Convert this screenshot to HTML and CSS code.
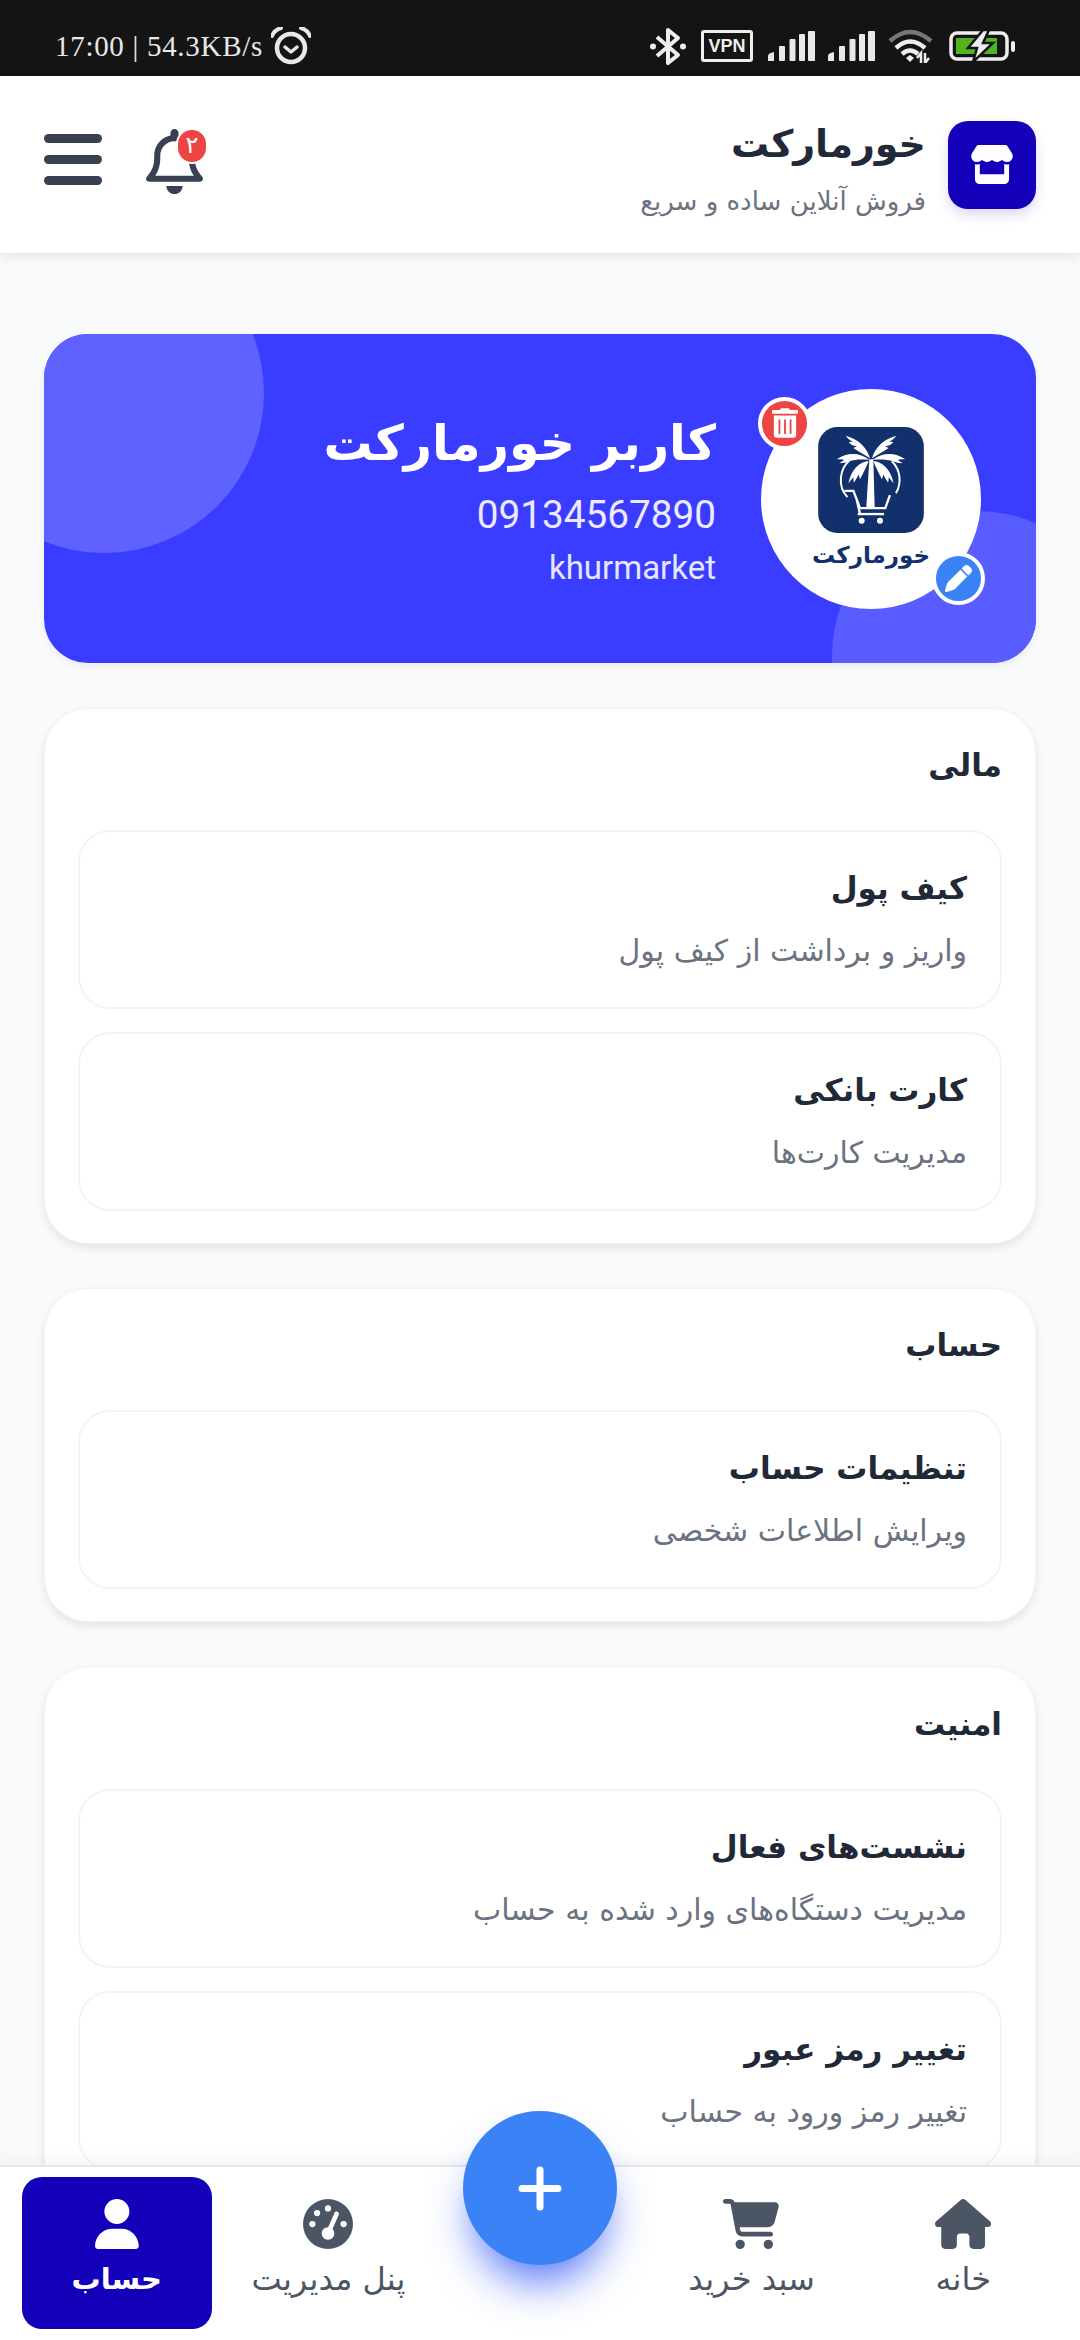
FILE: index.html
```html
<!DOCTYPE html>
<html lang="fa" dir="rtl">
<head>
    <meta charset="UTF-8">
    <meta name="viewport" content="width=device-width, initial-scale=1.0">
    <title>خورمارکت</title>
    <link rel="stylesheet" href="styles.css">
</head>
<body>
<div class="screen">
    <!-- phone status bar -->
    <div class="status-bar" dir="ltr">
        <div class="status-left">
            <span class="status-text">17:00 | 54.3KB/s</span>
            <svg class="ic-alarm" viewBox="0 0 40 38"><path d="M1 9 C3 4 6 2 10 1 M39 9 C37 4 34 2 30 1" fill="none" stroke="#e8e8e8" stroke-width="4" stroke-linecap="round"/><circle cx="20" cy="21" r="14" fill="none" stroke="#e8e8e8" stroke-width="4.5"/><path d="M14 20 L20 25 L26 20" fill="none" stroke="#e8e8e8" stroke-width="3.5" stroke-linecap="round" stroke-linejoin="round"/></svg>
        </div>
        <div class="status-right">
            <svg class="ic-bt" viewBox="0 0 36 39"><path d="M7 10 L28 28 L18 36 V3 L28 11 L7 29" fill="none" stroke="#eee" stroke-width="4" stroke-linejoin="round"/><circle cx="3" cy="19.500" r="3" fill="#eee"/><circle cx="33" cy="19.500" r="3" fill="#eee"/></svg>
            <span class="vpn">VPN</span>
            <svg class="ic-signal" viewBox="0 0 47 30"><g fill="#e8e8e8"><path d="M0 30V25Q0 22 6 21V30Z"/><rect x="11" y="15" width="6" height="15" rx="1"/><rect x="21.500" y="8" width="6" height="22" rx="1"/><rect x="40" y="0" width="7" height="30" rx="1"/><rect x="31" y="3" width="6" height="27" rx="1"/></g></svg>
            <svg class="ic-signal" viewBox="0 0 47 30"><g fill="#e8e8e8"><path d="M0 30V25Q0 22 6 21V30Z"/><rect x="11" y="15" width="6" height="15" rx="1"/><rect x="21.500" y="8" width="6" height="22" rx="1"/><rect x="40" y="0" width="7" height="30" rx="1"/><rect x="31" y="3" width="6" height="27" rx="1"/></g></svg>
            <svg class="ic-wifi" viewBox="0 0 45 34"><path d="M2 12 Q22 -6 43 12" fill="none" stroke="#777" stroke-width="4.500"/><path d="M8 19 Q22 6 37 19" fill="none" stroke="#eee" stroke-width="4.500"/><path d="M14 25 Q22 18 30 25" fill="none" stroke="#eee" stroke-width="4.500"/><path d="M18 29 L22 26 L26 29 L22 33Z" fill="#eee"/><path d="M33 34V24L29 29M37 24V34L41 29" fill="none" stroke="#eee" stroke-width="2.500"/></svg>
            <svg class="ic-batt" viewBox="0 0 68 30"><rect x="2" y="2" width="56" height="26" rx="6" fill="none" stroke="#eee" stroke-width="3.500"/><rect x="7" y="7" width="41" height="16" fill="#52b520"/><rect x="62" y="10" width="4" height="11" rx="2" fill="#eee"/><path d="M34 -1 L19 17 H28 L24 31 L44 12 H34 L40 -1Z" fill="#eee" stroke="#141414" stroke-width="2.500"/></svg>
        </div>
    </div>

    <header class="top-bar">
        <div class="brand">
            <div class="brand-logo">
                <svg viewBox="0 0 576 512"><path d="M547.6 103.8L490.3 13.1C485.2 5 476.1 0 466.4 0H109.6C99.9 0 90.8 5 85.7 13.1L28.3 103.8c-29.6 46.8-3.4 111.9 51.9 119.4c4 .5 8.1 .8 12.1 .8c26.1 0 49.3-11.4 65.2-29c15.9 17.6 39.1 29 65.2 29c26.1 0 49.3-11.4 65.2-29c15.9 17.6 39.1 29 65.2 29c26.2 0 49.3-11.4 65.2-29c16 17.6 39.1 29 65.2 29c4.1 0 8.1-.3 12.1-.8c55.5-7.4 81.8-72.5 52.1-119.4zM499.7 254.9l-.1 0c-5.3 .7-10.7 1.1-16.2 1.1c-12.4 0-24.3-1.9-35.4-5.3V384H128V250.6c-11.2 3.5-23.2 5.4-35.6 5.4c-5.5 0-11-.4-16.3-1.1l-.1 0c-4.1-.6-8.1-1.3-12-2.3V384v64c0 35.3 28.7 64 64 64H448c35.3 0 64-28.7 64-64V384 252.6c-4 1-8 1.8-12.3 2.3z"/></svg>
            </div>
            <div class="brand-text">
                <div class="brand-name">خورمارکت</div>
                <div class="brand-sub">فروش آنلاین ساده و سریع</div>
            </div>
        </div>
        <div class="top-actions">
            <div class="bell">
                <svg viewBox="0 0 448 512"><path d="M224 0c-17.7 0-32 14.3-32 32V51.2C119 66 64 130.6 64 208v25.4c0 45.4-15.5 89.5-43.8 124.900L5.300 377c-5.800 7.200-6.900 17.100-2.900 25.400S14.800 416 24 416H424c9.200 0 17.600-5.300 21.600-13.600s2.900-18.200-2.900-25.400l-14.900-18.600C399.500 322.900 384 278.800 384 233.400V208c0-77.400-55-142-128-156.800V32c0-17.700-14.300-32-32-32zm0 96c61.900 0 112 50.100 112 112v25.400c0 47.900 13.900 94.600 39.700 134.600H72.300C98.100 328 112 281.300 112 233.400V208c0-61.900 50.100-112 112-112zm64 352H224 160c0 17 6.700 33.300 18.700 45.300s28.300 18.700 45.300 18.700s33.300-6.700 45.300-18.700s18.700-28.300 18.700-45.300z"/></svg>
                <span class="bell-badge">۲</span>
            </div>
            <div class="burger"><span></span><span></span><span></span></div>
        </div>
    </header>

    <main class="content">
        <section class="profile">
            <div class="profile-blob blob-a"></div>
            <div class="profile-blob blob-b"></div>
            <div class="avatar">
                <svg class="avatar-mark" viewBox="24 21 318 319">
                    <rect x="24" y="21" width="318" height="319" rx="58" fill="#12306b"/>
                    <g fill="#fff">
                        <path d="M178 118 L190 118 L194 262 L169 262Z"/>
                        <g id="fronds">
                            <path d="M180 116 C172 82 142 56 107 47 C114 56 118 60 128 64 C122 66 120 66 116 66 C124 76 130 78 140 78 C136 82 134 82 130 84 C146 96 164 104 180 116Z"/>
                            <path d="M178 120 C150 98 112 96 80 118 C90 118 96 118 102 120 C96 124 92 126 88 130 C100 130 108 128 116 124 C136 118 158 118 178 120Z"/>
                            <path d="M176 124 C150 124 124 148 115 190 C122 182 124 178 130 172 C130 180 130 184 132 188 C138 178 142 172 146 164 C148 170 148 174 150 178 C160 160 168 142 176 124Z"/>
                        </g>
                        <use href="#fronds" transform="translate(366 0) scale(-1 1)"/>
                    </g>
                    <g fill="none" stroke="#fff">
                        <path d="M118 122 C90 145 80 200 112 232" stroke-width="6"/>
                        <path d="M246 124 C272 150 276 190 258 220" stroke-width="6"/>
                        <path d="M103 213 H130 L150 265 H226 L240 226" stroke-width="7"/>
                        <path d="M143 283 H222" stroke-width="7"/>
                        <path d="M140 240 L150 283" stroke-width="7"/>
                    </g>
                    <circle cx="155" cy="303" r="9" fill="#fff"/>
                    <circle cx="210" cy="303" r="9" fill="#fff"/>
                </svg>
                <div class="avatar-name">خورمارکت</div>
                <span class="avatar-btn btn-del">
                    <svg viewBox="0 0 448 512"><path d="M32 464a48 48 0 0 0 48 48h288a48 48 0 0 0 48-48V128H32zm272-256a16 16 0 0 1 32 0v224a16 16 0 0 1-32 0zm-96 0a16 16 0 0 1 32 0v224a16 16 0 0 1-32 0zm-96 0a16 16 0 0 1 32 0v224a16 16 0 0 1-32 0zM432 32H312l-9.400-18.700A24 24 0 0 0 281.100 0H166.800a23.720 23.720 0 0 0-21.400 13.300L136 32H16A16 16 0 0 0 0 48v32a16 16 0 0 0 16 16h416a16 16 0 0 0 16-16V48a16 16 0 0 0-16-16z"/></svg>
                </span>
                <span class="avatar-btn btn-edit">
                    <svg viewBox="0 0 512 512"><path d="M362.700 19.300L314.300 67.700 444.300 197.700l48.400-48.400c25-25 25-65.500 0-90.500L453.300 19.300c-25-25-65.500-25-90.500 0zm-71 71L58.600 323.500c-10.400 10.400-18 23.300-22.200 37.400L1 481.200C-1.500 489.700 .8 498.800 7 505s15.300 8.500 23.700 6.100l120.300-35.400c14.100-4.200 27-11.800 37.400-22.200L421.700 220.300 291.700 90.300z"/></svg>
                </span>
            </div>
            <div class="profile-info">
                <div class="profile-name">کاربر خورمارکت</div>
                <div class="profile-phone">09134567890</div>
                <div class="profile-user">khurmarket</div>
            </div>
        </section>

        <section class="panel">
            <h2 class="panel-title">مالی</h2>
            <div class="panel-items">
                <div class="row">
                    <div class="row-title">کیف پول</div>
                    <div class="row-sub">واریز و برداشت از کیف پول</div>
                </div>
                <div class="row">
                    <div class="row-title">کارت بانکی</div>
                    <div class="row-sub">مدیریت کارت‌ها</div>
                </div>
            </div>
        </section>

        <section class="panel">
            <h2 class="panel-title">حساب</h2>
            <div class="panel-items">
                <div class="row">
                    <div class="row-title">تنظیمات حساب</div>
                    <div class="row-sub">ویرایش اطلاعات شخصی</div>
                </div>
            </div>
        </section>

        <section class="panel">
            <h2 class="panel-title">امنیت</h2>
            <div class="panel-items">
                <div class="row">
                    <div class="row-title">نشست‌های فعال</div>
                    <div class="row-sub">مدیریت دستگاه‌های وارد شده به حساب</div>
                </div>
                <div class="row">
                    <div class="row-title">تغییر رمز عبور</div>
                    <div class="row-sub">تغییر رمز ورود به حساب</div>
                </div>
            </div>
        </section>
    </main>

    <nav class="bottom-nav">
        <a class="nav-item">
            <svg viewBox="0 0 576 512"><path d="M575.800 255.500c0 18-15 32.100-32 32.100h-32l.7 160.200c0 2.700-.2 5.400-.5 8.100V472c0 22.100-17.900 40-40 40H456c-1.100 0-2.200 0-3.300-.1c-1.400 .1-2.800 .1-4.200 .1H416 392c-22.100 0-40-17.900-40-40V448 384c0-17.700-14.300-32-32-32H256c-17.700 0-32 14.300-32 32v64 24c0 22.100-17.900 40-40 40H160 128.100c-1.500 0-3-.1-4.500-.2c-1.200 .1-2.400 .2-3.600 .2H104c-22.100 0-40-17.900-40-40V360c0-.9 0-1.900 .1-2.800V287.600H32c-18 0-32-14-32-32.100c0-9 3-17 10-24L266.400 8c7-7 15-8 22-8s15 2 21 7L564.800 231.500c8 7 12 15 11 24z"/></svg>
            <span>خانه</span>
        </a>
        <a class="nav-item">
            <svg viewBox="0 0 576 512"><path d="M0 24C0 10.700 10.700 0 24 0H69.500c22 0 41.500 12.800 50.600 32h411c26.300 0 45.500 25 38.600 50.400l-41 152.300c-8.500 31.400-37 53.300-69.500 53.300H170.700l5.400 28.500c2.200 11.300 12.100 19.500 23.600 19.500H488c13.300 0 24 10.700 24 24s-10.700 24-24 24H199.700c-34.600 0-64.300-24.600-70.700-58.500L77.400 54.500c-.7-3.800-4-6.500-7.900-6.500H24C10.700 48 0 37.300 0 24zM128 464a48 48 0 1 1 96 0 48 48 0 1 1 -96 0zm336-48a48 48 0 1 1 0 96 48 48 0 1 1 0-96z"/></svg>
            <span>سبد خرید</span>
        </a>
        <div class="nav-slot">
            <button class="fab"><svg viewBox="0 0 44 45"><path d="M22 4V41M4 22.500H40" fill="none" stroke="#fff" stroke-width="7" stroke-linecap="round"/></svg></button>
        </div>
        <a class="nav-item">
            <svg viewBox="0 0 512 512"><path d="M0 256a256 256 0 1 1 512 0A256 256 0 1 1 0 256zM288 96a32 32 0 1 0 -64 0 32 32 0 1 0 64 0zM256 416c35.300 0 64-28.700 64-64c0-17.400-6.900-33.100-18.100-44.600L366 161.700c5.300-12.100-.2-26.300-12.300-31.600s-26.300 .2-31.600 12.300L257.900 288c-.6 0-1.300 0-1.900 0c-35.300 0-64 28.700-64 64s28.700 64 64 64zM176 144a32 32 0 1 0 -64 0 32 32 0 1 0 64 0zM96 288a32 32 0 1 0 0-64 32 32 0 1 0 0 64zm352-32a32 32 0 1 0 -64 0 32 32 0 1 0 64 0z"/></svg>
            <span>پنل مدیریت</span>
        </a>
        <a class="nav-item active">
            <svg viewBox="0 0 448 512"><path d="M224 256A128 128 0 1 0 224 0a128 128 0 1 0 0 256zm-45.700 48C79.800 304 0 383.800 0 482.300C0 498.700 13.300 512 29.700 512H418.300c16.400 0 29.700-13.300 29.700-29.700C448 383.800 368.200 304 269.700 304H178.300z"/></svg>
            <span>حساب</span>
        </a>
    </nav>
</div>
</body>
</html>
```

FILE: styles.css
```css
* {
    box-sizing: border-box;
}
html, body {
    margin: 0;
    padding: 0;
}
body {
    font-family: "DejaVu Sans", sans-serif;
    background-color: #f9fafb;
    color: #1f2937;
}
.screen {
    width: 1080px;
    height: 2340px;
    display: flex;
    flex-direction: column;
    overflow: hidden;
    position: relative;
}

/* status bar */
.status-bar {
    height: 76px;
    flex: none;
    background-color: #141414;
    display: flex;
    justify-content: space-between;
    align-items: center;
    padding: 16px 63px 0 55px;
}
.status-left {
    display: flex;
    align-items: center;
    gap: 8px;
}
.status-text {
    font-family: "Liberation Serif", serif;
    font-size: 29px;
    color: #e8e8e8;
    letter-spacing: 0.7px;
}
.status-right {
    display: flex;
    align-items: center;
}
.ic-alarm {
    width: 40px;
    height: 38px;
}
.ic-bt {
    width: 36px;
    height: 39px;
    margin-right: 15px;
}
.vpn {
    width: 52px;
    height: 32px;
    border: 3px solid #eee;
    border-radius: 3px;
    color: #eee;
    font-family: "Liberation Sans", sans-serif;
    font-size: 18px;
    font-weight: bold;
    line-height: 26px;
    text-align: center;
    margin-right: 15px;
}
.ic-signal {
    width: 47px;
    height: 30px;
    margin-right: 13px;
}
.ic-wifi {
    width: 45px;
    height: 34px;
    margin-right: 16px;
}
.ic-batt {
    width: 68px;
    height: 30px;
}

/* header */
.top-bar {
    height: 177px;
    flex: none;
    background-color: #fff;
    box-shadow: 0 4px 10px rgba(0, 0, 0, 0.08);
    display: flex;
    justify-content: space-between;
    align-items: center;
    padding: 0 44px;
    position: relative;
    z-index: 2;
}
.brand {
    display: flex;
    align-items: center;
    gap: 22px;
}
.brand-logo {
    width: 88px;
    height: 88px;
    background-color: #1300b8;
    border-radius: 20px;
    box-shadow: 0 6px 12px rgba(19, 0, 184, 0.15);
    display: flex;
    align-items: center;
    justify-content: center;
}
.brand-logo svg {
    width: 44px;
    height: 39px;
    fill: #fff;
}
.brand-text {
    padding-top: 9px;
}
.brand-name {
    font-size: 38px;
    font-weight: bold;
    line-height: 54px;
}
.brand-sub {
    margin-top: 9px;
    font-size: 26px;
    line-height: 42px;
    color: #6b7280;
}
.top-actions {
    display: flex;
    align-items: flex-start;
    gap: 44px;
    margin-bottom: 6px;
}
.bell {
    width: 57px;
    height: 65px;
    position: relative;
}
.bell svg {
    display: block;
    width: 57px;
    height: 65px;
    fill: #374151;
}
.bell-badge {
    position: absolute;
    top: -1px;
    left: 30px;
    width: 32px;
    height: 36px;
    background-color: #ef4444;
    border: 2px solid #fff;
    border-radius: 16px;
    color: #fff;
    font-size: 24px;
    line-height: 30px;
    text-align: center;
}
.burger {
    width: 58px;
    margin-top: 5px;
    display: flex;
    flex-direction: column;
    gap: 12px;
}
.burger span {
    height: 9px;
    background-color: #374151;
    border-radius: 5px;
}

/* scrolling part */
.content {
    flex: 1;
    min-height: 0;
    overflow: hidden;
    padding: 81px 44px 0;
    display: flex;
    flex-direction: column;
    gap: 44.5px;
}
.profile {
    height: 329px;
    flex: none;
    background-color: #3a3dff;
    border-radius: 44px;
    box-shadow: 0 4px 10px rgba(0, 0, 0, 0.06);
    display: flex;
    align-items: center;
    gap: 45px;
    padding-right: 55px;
    position: relative;
    overflow: hidden;
}
.profile-blob {
    position: absolute;
    border-radius: 50%;
}
.blob-a {
    width: 320px;
    height: 320px;
    left: -100px;
    top: -101px;
    background-color: #5f62ff;
}
.blob-b {
    width: 290px;
    height: 290px;
    left: 788px;
    top: 177px;
    background-color: #595cff;
}
.avatar {
    width: 220px;
    height: 220px;
    flex: none;
    background-color: #fff;
    border-radius: 50%;
    position: relative;
    display: flex;
    flex-direction: column;
    align-items: center;
    padding-top: 38px;
}
.avatar-mark {
    width: 106px;
    height: 106px;
    flex: none;
}
.avatar-name {
    font-size: 23px;
    font-weight: bold;
    color: #12306b;
    line-height: 44px;
}
.avatar-btn {
    position: absolute;
    width: 53px;
    height: 53px;
    border: 4px solid #fff;
    border-radius: 50%;
    display: flex;
    align-items: center;
    justify-content: center;
}
.avatar-btn svg {
    fill: #fff;
}
.btn-del {
    top: 8px;
    left: -3px;
    background-color: #ef4444;
}
.btn-del svg {
    width: 26px;
    height: 30px;
}
.btn-edit {
    top: 163px;
    left: 171px;
    background-color: #3b82f6;
}
.btn-edit svg {
    width: 27px;
    height: 27px;
}
.profile-info {
    position: relative;
    color: #fff;
    text-align: right;
    padding-top: 5px;
}
.profile-name {
    font-size: 49px;
    font-weight: bold;
    line-height: 72px;
    margin-bottom: 8px;
}
.profile-phone {
    font-family: Roboto, sans-serif;
    font-size: 38.7px;
    line-height: 54px;
    color: #eceaff;
}
.profile-user {
    font-family: Roboto, sans-serif;
    font-size: 33px;
    line-height: 52px;
    color: #e6e6ff;
}

/* menu cards */
.panel {
    flex: none;
    background-color: #fff;
    border: 1px solid #f3f4f6;
    border-radius: 44px;
    box-shadow: 0 4px 8px rgba(0, 0, 0, 0.09);
    padding: 29px 33px 32px;
}
.panel-title {
    margin: 0 0 38px;
    font-size: 31px;
    font-weight: bold;
    line-height: 54px;
}
.panel-items {
    display: flex;
    flex-direction: column;
    gap: 23px;
}
.row {
    height: 179px;
    border: 2px solid #f3f4f6;
    border-radius: 32px;
    padding: 30px 33px 0;
}
.row-title {
    font-size: 31px;
    font-weight: bold;
    line-height: 52px;
    margin-bottom: 16px;
}
.row-sub {
    font-size: 30px;
    line-height: 42px;
    color: #6b7280;
}

/* bottom navigation */
.bottom-nav {
    position: absolute;
    left: 0;
    right: 0;
    bottom: 0;
    height: 175px;
    background-color: #fff;
    border-top: 2px solid #e5e7eb;
    box-shadow: 0 -6px 14px rgba(0, 0, 0, 0.04);
    display: grid;
    grid-template-columns: repeat(5, 1fr);
    padding: 10px 11px 11px;
}
.nav-item {
    margin: 0 11px;
    border-radius: 20px;
    display: flex;
    flex-direction: column;
    align-items: center;
    padding-top: 22px;
    color: #4b5563;
    font-size: 32px;
    line-height: 40px;
    white-space: nowrap;
}
.nav-item svg {
    height: 50px;
    fill: #4b5563;
    margin-bottom: 10px;
}
.nav-item.active {
    background-color: #1300b8;
    color: #fff;
    font-size: 29px;
    font-weight: bold;
}
.nav-item.active svg {
    fill: #fff;
}
.nav-slot {
    position: relative;
}
.fab {
    position: absolute;
    top: -66px;
    left: 29px;
    width: 154px;
    height: 154px;
    padding: 0;
    border: 0;
    border-radius: 50%;
    background-color: #3b82f6;
    box-shadow: 0 28px 44px -12px rgba(50, 90, 246, 0.85);
    display: flex;
    align-items: center;
    justify-content: center;
}
.fab svg {
    width: 44px;
    height: 45px;
}
```
